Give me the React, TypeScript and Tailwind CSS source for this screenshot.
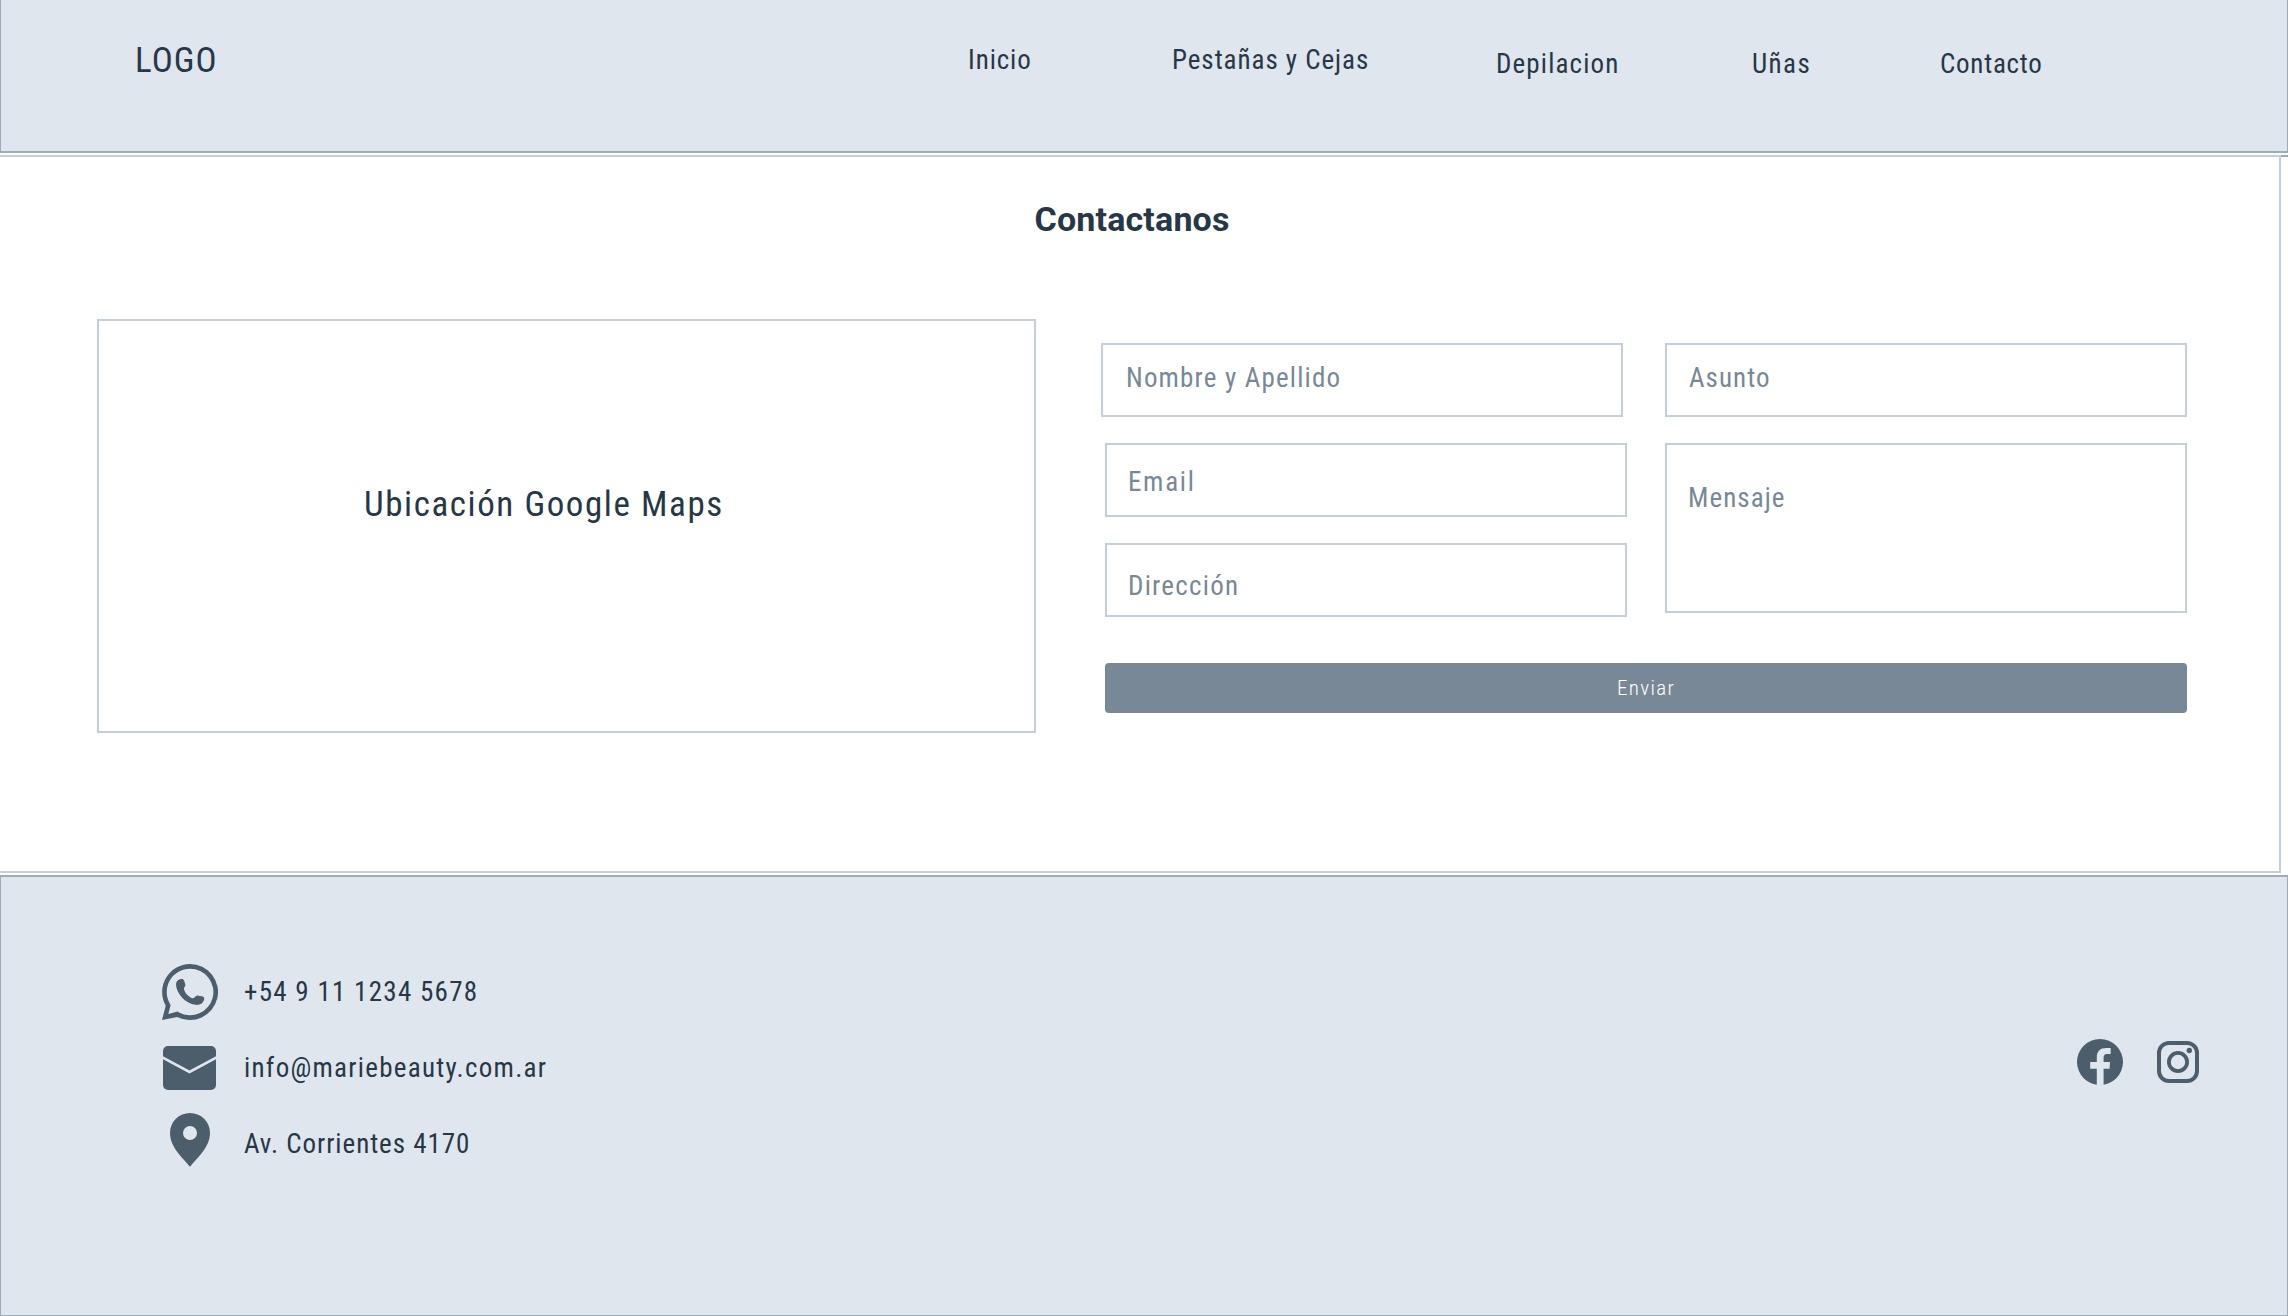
import React from "react";
import clsx from "clsx";

const navItems = [
  { label: "Inicio", className: "mt-[3px] tracking-[0.9px]" },
  { label: "Pestañas y Cejas", className: "mt-[3px] tracking-[0.96px]" },
  { label: "Depilacion", className: "mt-[7px] tracking-[1.15px]" },
  { label: "Uñas", className: "mt-[7px] tracking-[1.44px]" },
  { label: "Contacto", className: "mt-[7px] tracking-[0.75px]" },
];

function Field({ label, className }: { label: string; className: string }) {
  return (
    <div
      className={clsx(
        "w-[522px] border-2 border-[#c3cfda] bg-white text-[27px] leading-8 text-[#788896]",
        className,
      )}
    >
      {label}
    </div>
  );
}

function WhatsappIcon() {
  return (
    <svg className="h-14 w-14" viewBox="0 0 56 56" fill="currentColor">
      <path
        fillRule="evenodd"
        d="M28 0A28 28 0 1 1 15.2 52.9L0 56L3.7 41.7A28 28 0 0 1 28 0ZM28 4.7A23.3 23.3 0 0 0 7.5 39L8.6 41.2L6.3 50L15.6 47.6L17 48.5A23.3 23.3 0 1 0 28 4.7Z"
      />
      <path d="M18 15.3C20 14.5 21.6 15 22.1 16.6L23.4 21C23.6 22.3 21.6 23.6 21.9 24.9C22.9 29 26.5 32.8 30.5 34.2C32 34.7 33.5 31.3 35.5 31.4L40.6 32.6C42.2 33.1 42.6 34.3 42 36C41 39.6 37.6 41.3 33.5 40.8C23 39.5 14.5 29.5 14 20.8C13.9 18 15.5 16.2 18 15.3Z" />
    </svg>
  );
}

function MailIcon() {
  return (
    <svg className="h-11 w-[53px]" viewBox="0 0 53 44" fill="currentColor">
      <rect width="53" height="44" rx="5" />
      <path d="M-1 11.2L26.5 26L54 11.2" fill="none" stroke="#dfe6ee" strokeWidth="2.6" />
    </svg>
  );
}

function PinIcon() {
  return (
    <svg className="h-[54px] w-10" viewBox="0 0 40 54" fill="currentColor">
      <path
        fillRule="evenodd"
        d="M20 0A20 20 0 0 0 0 20C0 34 12 44 20 53.8C28 44 40 34 40 20A20 20 0 0 0 20 0ZM20 13A7 7 0 1 1 20 27A7 7 0 1 1 20 13Z"
      />
    </svg>
  );
}

function FacebookIcon() {
  return (
    <svg className="h-[46px] w-[46px]" viewBox="0 0 46 46" fill="currentColor">
      <circle cx="23" cy="23" r="23" />
      <path
        fill="#dfe6ee"
        d="M19.8 46V29.7H13.2V23H19.8V18.5C19.8 12 23.5 9 29 9H33.7V15H30C27.5 15 26.6 16.5 26.6 19V23H33L32.6 29.7H26.6V46Z"
      />
    </svg>
  );
}

function InstagramIcon() {
  return (
    <svg className="h-[42px] w-[42px]" viewBox="0 0 42 42" fill="none" stroke="currentColor">
      <rect x="2" y="2" width="38" height="38" rx="10" strokeWidth="4" />
      <circle cx="21" cy="21" r="9.1" strokeWidth="3.8" />
      <circle cx="32.3" cy="9.5" r="2.7" fill="currentColor" stroke="none" />
    </svg>
  );
}

export default function App() {
  return (
    <div className="flex h-[1316px] w-[2288px] flex-col bg-white font-['Roboto',sans-serif] text-[#273746] [font-stretch:87.5%]">
      <header className="grid h-[153px] shrink-0 grid-cols-[833px_204px_324px_256px_188px_1fr] items-start border-x border-b-2 border-[#9bacba] bg-[#dfe6ee] pt-[41px] pl-[134px]">
        <div className="text-[35px] leading-10 tracking-[1.1px]">LOGO</div>
        {navItems.map((item) => (
          <a key={item.label} className={clsx("text-[27px] leading-8 whitespace-nowrap", item.className)}>
            {item.label}
          </a>
        ))}
      </header>

      <div className="mt-0.5 flex h-[718px] shrink-0">
        <main className="w-[2281px] border-t-2 border-r-2 border-b-2 border-[#c3cfda]">
          <h2 className="mt-[42px] ml-[1034.5px] text-[34px] leading-10 font-bold tracking-[0.16px] [font-stretch:100%]">
            Contactanos
          </h2>

          <div className="mt-20 ml-[97px] flex items-start">
            <div className="h-[414px] w-[939px] border-2 border-[#c3cfda] pt-[164px] pl-[265px] text-[35px] leading-10 tracking-[1.58px]">
              Ubicación Google Maps
            </div>

            <form className="mt-6 ml-[65px] w-[1086px]">
              <div className="flex items-start justify-between">
                <div className="flex flex-col gap-[26px]">
                  <Field label="Nombre y Apellido" className="h-[74px] pt-[17px] pl-[23px] tracking-[1.17px]" />
                  <Field label="Email" className="ml-1 h-[74px] pt-[21px] pl-[21px] tracking-[1.7px]" />
                  <Field label="Dirección" className="ml-1 h-[74px] pt-[25px] pl-[21px] tracking-[1.25px]" />
                </div>
                <div className="flex flex-col gap-[26px]">
                  <Field label="Asunto" className="h-[74px] pt-[17px] pl-[22px] tracking-[1.05px]" />
                  <Field label="Mensaje" className="h-[170px] pt-[37px] pl-[21px] tracking-[1.05px]" />
                </div>
              </div>
              <button
                type="button"
                className="mt-[46px] ml-1 flex h-[50px] w-[1082px] justify-center rounded bg-[#788896] pt-[13px] text-[21px] leading-6 font-light tracking-[1.34px] text-white"
              >
                Enviar
              </button>
            </form>
          </div>
        </main>
        <div className="h-0.5 flex-1 bg-[#9bacba]" />
      </div>

      <footer className="mt-0.5 flex flex-1 items-start justify-between border border-t-2 border-[#9bacba] bg-[#dfe6ee] pr-[88px] pl-[161px]">
        <div className="mt-[87px] flex items-start">
          <div className="flex w-14 flex-col items-center text-[#4c5d6b]">
            <WhatsappIcon />
            <div className="mt-[26px] mr-px">
              <MailIcon />
            </div>
            <div className="mt-[23px]">
              <PinIcon />
            </div>
          </div>
          <div className="mt-3 ml-[26px] flex flex-col gap-11 text-[27px] leading-8 whitespace-nowrap">
            <span className="tracking-[1.27px]">+54 9 11 1234 5678</span>
            <span className="tracking-[1.27px]">info@mariebeauty.com.ar</span>
            <span className="tracking-[0.96px]">Av. Corrientes 4170</span>
          </div>
        </div>
        <div className="mt-[162px] flex items-center gap-[34px] text-[#4c5d6b]">
          <FacebookIcon />
          <InstagramIcon />
        </div>
      </footer>
    </div>
  );
}
